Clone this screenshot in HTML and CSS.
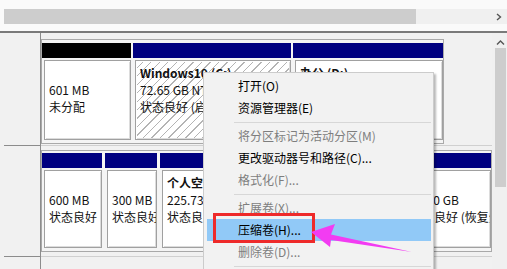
FILE: index.html
```html
<!DOCTYPE html>
<html lang="zh-CN">
<head>
<meta charset="utf-8">
<title>磁盘管理</title>
<link rel="stylesheet" href="styles.css">
</head>
<body>
<div class="top">
  <div class="hscroll">
    <div class="hs-left"></div>
    <div class="hs-thumb"></div>
    <div class="hs-track"></div>
    <svg class="hs-arrow" width="8" height="8" viewBox="0 0 8 8"><polyline points="2,1 5.5,4 2,7" fill="none" stroke="#555" stroke-width="1.4"/></svg>
  </div>
</div>
<div class="main">
  <div class="rows">
    <div class="row row1">
      <div class="label"></div>
      <div class="disk">
        <div class="box box1">
          <div class="part" style="width:89px">
            <div class="hdr black"></div>
            <div class="body">
              <div class="line title">&nbsp;</div>
              <div class="line">601 MB</div>
              <div class="line">未分配</div>
            </div>
          </div>
          <div class="part" style="width:158px">
            <div class="hdr"></div>
            <div class="body hatch">
              <div class="line title">Windows10 (C:)</div>
              <div class="line">72.65 GB NTFS</div>
              <div class="line">状态良好 (启动, 页面文件, 故障转储, 主分区)</div>
            </div>
          </div>
          <div class="part" style="width:150px">
            <div class="hdr"></div>
            <div class="body">
              <div class="line title">办公 (D:)</div>
              <div class="line">97.66 GB NTFS</div>
              <div class="line">状态良好 (主分区)</div>
            </div>
          </div>
        </div>
      </div>
    </div>
    <div class="row row2">
      <div class="label"></div>
      <div class="disk">
        <div class="box box2">
          <div class="part" style="width:60px">
            <div class="hdr"></div>
            <div class="body">
              <div class="line title">&nbsp;</div>
              <div class="line">600 MB</div>
              <div class="line">状态良好</div>
            </div>
          </div>
          <div class="part" style="width:52px">
            <div class="hdr"></div>
            <div class="body">
              <div class="line title">&nbsp;</div>
              <div class="line">300 MB</div>
              <div class="line">状态良好 (EFI 系统分区)</div>
            </div>
          </div>
          <div class="part" style="width:240px">
            <div class="hdr"></div>
            <div class="body">
              <div class="line title">个人空间 (E:)</div>
              <div class="line">225.73 GB NTFS</div>
              <div class="line">状态良好 (基本数据分区)</div>
            </div>
          </div>
          <div class="part" style="width:88px">
            <div class="hdr"></div>
            <div class="body">
              <div class="line title">&nbsp;</div>
              <div class="line">10.00 GB</div>
              <div class="line">状态良好 (恢复分区)</div>
            </div>
          </div>
        </div>
      </div>
    </div>
    <div class="row row3">
      <div class="label"></div>
      <div class="disk"></div>
    </div>
  </div>
  <div class="vscroll">
    <svg class="vs-arrow" width="9" height="8" viewBox="0 0 9 8"><polyline points="1,5.5 4.5,2 8,5.5" fill="none" stroke="#555" stroke-width="1.4"/></svg>
    <div class="vs-thumb"></div>
  </div>
</div>

<div class="menu">
  <div class="item">打开(O)</div>
  <div class="item">资源管理器(E)</div>
  <div class="sep"></div>
  <div class="item off">将分区标记为活动分区(M)</div>
  <div class="item">更改驱动器号和路径(C)...</div>
  <div class="item off">格式化(F)...</div>
  <div class="sep"></div>
  <div class="item off">扩展卷(X)...</div>
  <div class="item hot">压缩卷(H)...</div>
  <div class="item off">删除卷(D)...</div>
  <div class="sep"></div>
</div>

<svg class="annot" width="507" height="269" viewBox="0 0 507 269">
  <rect x="214.5" y="214.5" width="99" height="27" fill="none" stroke="#ee2a2a" stroke-width="3"/>
  <polygon points="311,232 335,224 331,234.5 412,252 331,240 330,247" fill="#f23cf2"/>
</svg>
</body>
</html>
```
FILE: styles.css
```css
html, body {
  margin: 0;
  padding: 0;
  width: 507px;
  height: 269px;
  overflow: hidden;
}
body {
  position: relative;
  background: #f1f1f1;
  font-family: "Noto Sans CJK SC", "Noto Sans", sans-serif;
  font-size: 12px;
  color: #000;
}

/* top strip with horizontal scrollbar */
.top {
  height: 31px;
  background: #fafafa;
  box-sizing: border-box;
  padding-top: 9px;
}
.hscroll {
  height: 15px;
  display: flex;
  align-items: center;
  background: #f0f0f0;
}
.hs-left { width: 4px; height: 15px; background: #fafafa; }
.hs-thumb { width: 412px; height: 15px; background: #cdcdcd; }
.hs-track { flex: 1; height: 15px; }
.hs-arrow { margin-right: 4px; }

/* main area */
.main {
  display: flex;
  border-top: 2px solid #7a7a7a;
  height: 236px;
}
.rows { width: 492px; }
.row { display: flex; }
.label {
  width: 36px;
  margin-left: 4px;
  border-right: 1px solid #8c8c8c;
  border-bottom: 1px solid #8c8c8c;
}
.disk {
  flex: 1;
  border-bottom: 1px solid #d0d0d0;
  box-sizing: border-box;
}
.row1 .disk { height: 113px; padding-top: 6px; }
.row1 .label { height: 112px; }
.row2 .disk { height: 111px; padding-top: 4px; }
.row2 .label { height: 110px; }
.row3 .label { height: 40px; border-bottom: none; }
.row3 .disk { border-bottom: none; }

.box {
  display: flex;
  border: 1px solid #a9a9a9;
  background: #f4f4f4;
  box-sizing: border-box;
}
.box1 { width: 403px; height: 105px; padding: 3px 2px 3px 0; gap: 2px; }
.box2 { width: 451px; height: 102px; padding: 2px 2px 3px 0; gap: 3px; }

.part {
  display: flex;
  flex-direction: column;
  flex: none;
}
.hdr { height: 15px; background: #000080; flex: none; }
.hdr.black { background: #000; }
.body {
  flex: 1;
  margin: 2px 0 0 2px;
  border: 1px solid #a0a0a0;
  box-shadow: inset 1px 1px 0 #ffffff, inset -1px -1px 0 #dcdcdc;
  background: #fff;
  padding: 3px 0 0 4px;
  overflow: hidden;
  white-space: nowrap;
}
.hatch {
  background: repeating-linear-gradient(135deg, #ffffff 0 5px, #b4b4b4 5px 6px);
}
.line { height: 17px; line-height: 17px; color: #111; }
.title { font-weight: bold; }

/* vertical scrollbar */
.vscroll {
  width: 15px;
  background: #f0f0f0;
  display: flex;
  flex-direction: column;
  align-items: center;
}
.vs-arrow { margin-top: 6px; margin-left: 2px; }
.vs-thumb {
  width: 11px;
  height: 139px;
  margin-top: 1px;
  margin-left: 2px;
  background: #cdcdcd;
}

/* context menu */
.menu {
  position: absolute;
  left: 203px;
  top: 72px;
  width: 225px;
  padding: 2px 2px 0;
  background: #f2f2f2;
  border: 1px solid #cccccc;
  border-bottom: none;
  box-shadow: 2px 2px 2px rgba(0, 0, 0, 0.28);
}
.item {
  height: 22px;
  line-height: 22px;
  padding-left: 31px;
  margin-left: 1px;
  white-space: nowrap;
}
.item.off { color: #7e7e7e; }
.item.hot { background: #91c9f7; }
.sep {
  box-sizing: border-box;
  height: 4px;
  padding-top: 2px;
  margin: 0 0 2px 28px;
  border-bottom: 1px solid #d7d7d7;
}

/* annotation overlay */
.annot {
  position: absolute;
  left: 0;
  top: 0;
  pointer-events: none;
}
```
